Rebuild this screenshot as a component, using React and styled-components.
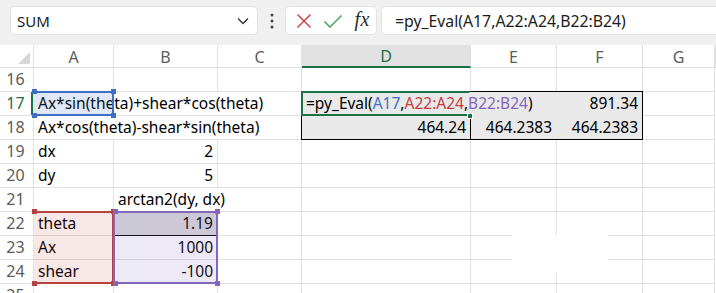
import React from 'react';
import styled, { createGlobalStyle } from 'styled-components';

const Global = createGlobalStyle`
  html, body { margin: 0; padding: 0; background: #fff; }
  body { font-family: "Noto Sans", "Open Sans", sans-serif; overflow: hidden; }
`;

const Page = styled.div`
  position: relative;
  width: 716px;
  height: 293px;
  overflow: hidden;
  background: #fff;
`;

/* ---------- toolbar ---------- */
const Toolbar = styled.div`
  height: 45px;
  box-sizing: border-box;
  background: #f0f0f0;
  display: flex;
  align-items: flex-start;
  padding: 6px 0 0 10px;
`;

const Field = styled.div`
  height: 29px;
  box-sizing: border-box;
  background: #fff;
  border: 1px solid #e3e3e3;
  border-radius: 5px;
  display: flex;
  align-items: center;
`;

const NameBox = styled(Field)`
  width: 248px;
  padding: 0 8px 0 6px;
  justify-content: space-between;
  font-size: 15px;
  color: #1b1b1b;
`;

const Dots = styled.div`
  width: 27px;
  height: 29px;
  display: flex;
  align-items: center;
  justify-content: center;
`;

const ButtonsBox = styled(Field)`
  width: 92px;
  padding: 0 6px 0 10px;
  justify-content: space-between;
`;

const Fx = styled.span`
  font-family: "Liberation Serif", "DejaVu Serif", serif;
  font-style: italic;
  font-size: 20px;
  color: #2b2b2b;
  letter-spacing: 0.5px;
  margin-top: -2px;
`;

const FormulaBox = styled(Field)`
  flex: 1;
  margin-left: 4px;
  margin-right: -8px;
  padding-left: 13px;
  font-size: 15.8px;
  color: #1b1b1b;
`;

/* ---------- sheet ---------- */
const Sheet = styled.div`
  display: grid;
  grid-template-columns: 34px 80px 104px 84px 169px 86px 86px 1fr;
  grid-template-rows: 23px repeat(10, 24px);
`;

const GRID = '#e1e1e1';

const Corner = styled.div`
  grid-column: 1;
  grid-row: 1;
  box-sizing: border-box;
  border-right: 1px solid ${GRID};
  border-bottom: 1px solid ${GRID};
  background: #fff;
  display: flex;
  align-items: flex-end;
  justify-content: flex-end;
  padding: 0 3px 3px 0;
`;

const ColHead = styled.div`
  grid-column: ${p => p.$col};
  grid-row: 1;
  box-sizing: border-box;
  border-right: 1px solid ${GRID};
  border-bottom: ${p => (p.$active ? '2px solid #1e7145' : `1px solid ${GRID}`)};
  background: ${p => (p.$active ? '#e1e1e1' : '#fff')};
  color: ${p => (p.$active ? '#1e6b41' : '#5c5c5c')};
  font-size: 16px;
  display: flex;
  align-items: center;
  justify-content: center;
  padding-top: 1px;
`;

const RowHead = styled.div`
  grid-column: 1;
  grid-row: ${p => p.$row};
  box-sizing: border-box;
  border-right: 1px solid ${GRID};
  border-bottom: 1px solid ${GRID};
  background: #fff;
  color: ${p => (p.$active ? '#1e7145' : '#5c5c5c')};
  box-shadow: ${p => (p.$active ? 'inset -2px 0 0 #1e7145' : 'none')};
  font-size: 16px;
  display: flex;
  align-items: flex-end;
  justify-content: center;
  padding: 0 2px 1px 0;
`;

const Cell = styled.div`
  grid-column: ${p => p.$col} / span ${p => p.$span || 1};
  grid-row: ${p => p.$row};
  box-sizing: border-box;
  border-right: 1px solid ${p => p.$rightLine || GRID};
  border-bottom: 1px solid ${p => p.$bottomLine || GRID};
  background: ${p => p.$bg || '#fff'};
  display: flex;
  align-items: flex-end;
  justify-content: ${p => (p.$right ? 'flex-end' : 'flex-start')};
  padding: 0 4px 1px 4px;
  font-size: 15.5px;
  line-height: 21px;
  color: #000;
  white-space: nowrap;
`;

const Ref = styled.span`
  color: ${p => p.$c};
`;

/* range highlight frames lying over the cells */
const Frame = styled.div`
  grid-column: ${p => p.$col} / span ${p => p.$cspan || 1};
  grid-row: ${p => p.$row} / span ${p => p.$rspan || 1};
  position: relative;
  z-index: 2;
  margin: -1px 0 0 -1px;
  box-sizing: border-box;
  border: ${p => p.$w || 2}px solid ${p => p.$c};
  ${p => (p.$noLeft ? 'border-left: none; margin-left: 0;' : '')}
  ${p => (p.$noRight ? 'border-right-color: transparent;' : '')}
  background: ${p => p.$fill || 'transparent'};
  pointer-events: none;
`;

const Handle = styled.span`
  position: absolute;
  width: 5px;
  height: 5px;
  background: ${p => p.$c};
  ${p => (p.$t ? 'top: -4px;' : 'bottom: -4px;')}
  ${p => (p.$l ? 'left: -2px;' : 'right: -4px;')}
`;

const FillHandle = styled.span`
  position: absolute;
  right: -4px;
  bottom: -5px;
  width: 6px;
  height: 6px;
  box-sizing: border-box;
  background: #1e7145;
  border: 1px solid #fff;
`;

const Blank = styled.div`
  position: absolute;
  left: 512px;
  top: 235px;
  width: 96px;
  height: 38px;
  background: #fff;
  z-index: 3;
`;

const Corners = ({ c }) => (
  <>
    <Handle $c={c} $t $l />
    <Handle $c={c} $t />
    <Handle $c={c} $l />
    <Handle $c={c} />
  </>
);

const COLS = ['A', 'B', 'C', 'D', 'E', 'F', 'G'];
const ROWS = [16, 17, 18, 19, 20, 21, 22, 23, 24, 25];
const GREY = '#e9e9e9';

// cells: [row, col, span, text, opts]
const cells = [
  [16, 2, 1], [16, 3, 1], [16, 4, 1], [16, 5, 1], [16, 6, 1], [16, 7, 1], [16, 8, 1],
  [17, 2, 3, 'Ax*sin(theta)+shear*cos(theta)'],
  [17, 5, 2, 'formula', { bg: GREY, rightLine: GREY, bottomLine: GREY }],
  [17, 7, 1, '891.34', { right: true, bg: GREY, bottomLine: GREY }],
  [17, 8, 1],
  [18, 2, 3, 'Ax*cos(theta)-shear*sin(theta)'],
  [18, 5, 1, '464.24', { right: true, bg: GREY, rightLine: '#000' }],
  [18, 6, 1, '464.2383', { right: true, bg: GREY, rightLine: GREY }],
  [18, 7, 1, '464.2383', { right: true, bg: GREY }],
  [18, 8, 1],
  [19, 2, 1, 'dx'], [19, 3, 1, '2', { right: true }], [19, 4, 1], [19, 5, 1], [19, 6, 1], [19, 7, 1], [19, 8, 1],
  [20, 2, 1, 'dy'], [20, 3, 1, '5', { right: true }], [20, 4, 1], [20, 5, 1], [20, 6, 1], [20, 7, 1], [20, 8, 1],
  [21, 2, 1], [21, 3, 2, 'arctan2(dy, dx)'], [21, 5, 1], [21, 6, 1], [21, 7, 1], [21, 8, 1],
  [22, 2, 1, 'theta'], [22, 3, 1, '1.19', { right: true, bg: '#d9d9d9', bottomLine: '#000' }], [22, 4, 1], [22, 5, 1], [22, 6, 1], [22, 7, 1], [22, 8, 1],
  [23, 2, 1, 'Ax'], [23, 3, 1, '1000', { right: true }], [23, 4, 1], [23, 5, 1], [23, 6, 1], [23, 7, 1], [23, 8, 1],
  [24, 2, 1, 'shear'], [24, 3, 1, '-100', { right: true }], [24, 4, 1], [24, 5, 1], [24, 6, 1], [24, 7, 1], [24, 8, 1],
  [25, 2, 1], [25, 3, 1], [25, 4, 1], [25, 5, 1], [25, 6, 1], [25, 7, 1], [25, 8, 1],
];

const gridRow = r => r - 14; // header is grid row 1, row 16 is grid row 2

const Formula = () => (
  <span>
    =py_Eval(<Ref $c="#3f6fc4">A17</Ref>,<Ref $c="#c43c3a">A22:A24</Ref>,<Ref $c="#8466bd">B22:B24</Ref>)
  </span>
);

export default function App() {
  return (
    <Page>
      <Global />
      <Toolbar>
        <NameBox>
          <span>SUM</span>
          <svg width="12" height="8" viewBox="0 0 12 8">
            <path d="M1 1.5 L6 6.5 L11 1.5" fill="none" stroke="#333" strokeWidth="1.3" />
          </svg>
        </NameBox>
        <Dots>
          <svg width="4" height="16" viewBox="0 0 4 16">
            <circle cx="2" cy="2" r="1.5" fill="#444" />
            <circle cx="2" cy="8" r="1.5" fill="#444" />
            <circle cx="2" cy="14" r="1.5" fill="#444" />
          </svg>
        </Dots>
        <ButtonsBox>
          <svg width="16" height="16" viewBox="0 0 16 16">
            <path d="M1.5 1.5 L14.5 14.5 M14.5 1.5 L1.5 14.5" stroke="#d13438" strokeWidth="1.4" />
          </svg>
          <svg width="20" height="16" viewBox="0 0 20 16">
            <path d="M1.5 8.5 L7 14 L18.5 2.5" fill="none" stroke="#35a04e" strokeWidth="1.4" />
          </svg>
          <Fx>fx</Fx>
        </ButtonsBox>
        <FormulaBox>=py_Eval(A17,A22:A24,B22:B24)</FormulaBox>
      </Toolbar>

      <Sheet>
        <Corner>
          <svg width="12" height="12" viewBox="0 0 12 12">
            <path d="M12 0 L12 12 L0 12 Z" fill="#d6d6d6" />
          </svg>
        </Corner>
        {COLS.map((c, i) => (
          <ColHead key={c} $col={i + 2} $active={c === 'D'}>{c}</ColHead>
        ))}
        <ColHead $col={9} />
        {ROWS.map(r => (
          <RowHead key={r} $row={gridRow(r)} $active={r === 17}>{r}</RowHead>
        ))}
        {cells.map(([r, c, span, text, o = {}], i) => (
          <Cell
            key={i}
            $row={gridRow(r)}
            $col={c}
            $span={span}
            $right={o.right}
            $bg={o.bg}
            $rightLine={o.rightLine}
            $bottomLine={o.bottomLine}
          >
            {text === 'formula' ? <Formula /> : text}
          </Cell>
        ))}

        {/* outline of D17:F18 */}
        <Frame $row={gridRow(17)} $col={5} $cspan={3} $rspan={2} $c="#000" $w={1} />
        {/* active cell D17 (editing: text runs over its right edge) */}
        <Frame $row={gridRow(17)} $col={5} $c="#1e7145" $noRight>
          <FillHandle />
        </Frame>
        {/* reference highlights */}
        <Frame $row={gridRow(17)} $col={2} $c="#3f6fc4" $fill="rgba(63,111,196,0.16)" $noLeft>
          <Corners c="#3f6fc4" />
        </Frame>
        <Frame $row={gridRow(22)} $rspan={3} $col={2} $c="#b8403d" $fill="rgba(200,70,66,0.13)" $noLeft>
          <Corners c="#b8403d" />
        </Frame>
        <Frame $row={gridRow(22)} $rspan={3} $col={3} $c="#8466bd" $fill="rgba(132,102,189,0.14)">
          <Corners c="#8466bd" />
        </Frame>
      </Sheet>
      <Blank />
    </Page>
  );
}
